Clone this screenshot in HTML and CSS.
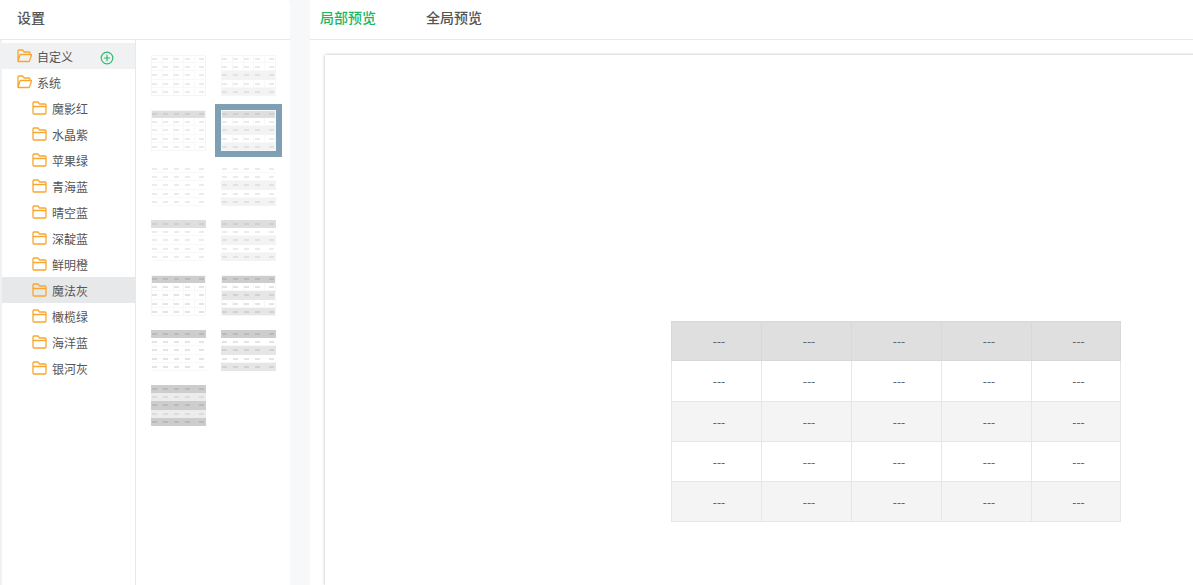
FILE: index.html
```html
<!DOCTYPE html>
<html lang="zh-CN">
<head>
  <meta charset="UTF-8">
  <title>设置</title>
  <link rel="stylesheet" href="styles.css">
</head>
<body>

  <svg class="defs" width="0" height="0">
    <symbol id="folder-open" viewBox="0 0 15 14">
      <path d="M1 12.5V2a1 1 0 0 1 1-1h3.6l1.6 2H12a1 1 0 0 1 1 1v1.5M1 12.5h10.6a1 1 0 0 0 .9-.6L14.500 6.300a.6.6 0 0 0-.6-.8H3.800a1 1 0 0 0-.9.6L1 12.500z" fill="none" stroke="#f9a62e" stroke-width="1.300" stroke-linejoin="round"/>
    </symbol>
    <symbol id="folder" viewBox="0 0 15 14">
      <path d="M1 2a1 1 0 0 1 1-1h4l1.600 2H13a1 1 0 0 1 1 1v8a1 1 0 0 1-1 1H2a1 1 0 0 1-1-1zM1 5.500h13" fill="none" stroke="#f9a62e" stroke-width="1.300" stroke-linejoin="round"/>
    </symbol>
  </svg>

  <!-- Settings panel -->
  <aside class="settings">
    <div class="panel-title">设置</div>
    <div class="settings-body">
      <ul class="tree">
        <li class="tree-item active">
          <svg class="folder"><use href="#folder-open"/></svg>自定义
          <svg class="add" viewBox="0 0 14 14">
            <circle cx="7" cy="7" r="5.800" fill="none" stroke="#2dbb6c" stroke-width="1.200"/>
            <path d="M7 3.800v6.400M3.800 7h6.400" stroke="#2dbb6c" stroke-width="1.200"/>
          </svg>
        </li>
        <li class="tree-item"><svg class="folder"><use href="#folder-open"/></svg>系统</li>
        <li class="tree-item child"><svg class="folder"><use href="#folder"/></svg>魔影红</li>
        <li class="tree-item child"><svg class="folder"><use href="#folder"/></svg>水晶紫</li>
        <li class="tree-item child"><svg class="folder"><use href="#folder"/></svg>苹果绿</li>
        <li class="tree-item child"><svg class="folder"><use href="#folder"/></svg>青海蓝</li>
        <li class="tree-item child"><svg class="folder"><use href="#folder"/></svg>晴空蓝</li>
        <li class="tree-item child"><svg class="folder"><use href="#folder"/></svg>深靛蓝</li>
        <li class="tree-item child"><svg class="folder"><use href="#folder"/></svg>鲜明橙</li>
        <li class="tree-item child selected"><svg class="folder"><use href="#folder"/></svg>魔法灰</li>
        <li class="tree-item child"><svg class="folder"><use href="#folder"/></svg>橄榄绿</li>
        <li class="tree-item child"><svg class="folder"><use href="#folder"/></svg>海洋蓝</li>
        <li class="tree-item child"><svg class="folder"><use href="#folder"/></svg>银河灰</li>
      </ul>

      <div class="thumbs">
        <div class="thumb grid"><i></i><i></i><i></i><i></i><i></i></div>
        <div class="thumb grid striped"><i></i><i></i><i></i><i></i><i></i></div>
        <div class="thumb grid head"><i></i><i></i><i></i><i></i><i></i></div>
        <div class="thumb-picked"><div class="thumb grid head striped"><i></i><i></i><i></i><i></i><i></i></div></div>
        <div class="thumb lines"><i></i><i></i><i></i><i></i><i></i></div>
        <div class="thumb lines striped"><i></i><i></i><i></i><i></i><i></i></div>
        <div class="thumb lines head"><i></i><i></i><i></i><i></i><i></i></div>
        <div class="thumb lines head striped"><i></i><i></i><i></i><i></i><i></i></div>
        <div class="thumb grid dark head"><i></i><i></i><i></i><i></i><i></i></div>
        <div class="thumb grid dark head striped"><i></i><i></i><i></i><i></i><i></i></div>
        <div class="thumb lines dark head"><i></i><i></i><i></i><i></i><i></i></div>
        <div class="thumb lines dark head striped"><i></i><i></i><i></i><i></i><i></i></div>
        <div class="thumb lines dark head striped solid"><i></i><i></i><i></i><i></i><i></i></div>
      </div>
    </div>
  </aside>

  <!-- Preview panel -->
  <main class="preview">
    <nav class="tabs">
      <a class="tab current" href="#">局部预览</a>
      <a class="tab" href="#">全局预览</a>
    </nav>
    <div class="canvas">
      <table class="sample">
        <tr class="sample-head"><td>---</td><td>---</td><td>---</td><td>---</td><td>---</td></tr>
        <tr class="tall"><td>---</td><td>---</td><td>---</td><td>---</td><td>---</td></tr>
        <tr class="alt"><td>---</td><td>---</td><td>---</td><td>---</td><td>---</td></tr>
        <tr><td>---</td><td>---</td><td>---</td><td>---</td><td>---</td></tr>
        <tr class="alt"><td>---</td><td>---</td><td>---</td><td>---</td><td>---</td></tr>
      </table>
    </div>
  </main>

</body>
</html>
```

FILE: styles.css
```css
/* General Styles */
html, body {
  height: 100%;
}

body {
  margin: 0;
  display: flex;
  gap: 20px;
  overflow: hidden;
  background-color: #f7f8fa;
  color: #555;
  font-family: "Noto Sans CJK SC", "Noto Sans", sans-serif;
  font-size: 12px;
}

.defs {
  position: absolute;
}

/* Settings panel */
.settings {
  width: 290px;
  flex-shrink: 0;
  display: flex;
  flex-direction: column;
  background-color: white;
  border-top-right-radius: 4px;
}

.panel-title {
  height: 39px;
  line-height: 35px;
  padding-left: 17px;
  font-size: 14px;
  font-weight: 500;
  color: #555;
  border-bottom: 1px solid #e6e9ed;
  flex-shrink: 0;
}

.settings-body {
  flex: 1;
  display: flex;
}

.tree {
  width: 133px;
  margin: 0;
  padding: 3px 0 0;
  list-style-type: none;
  border-left: 2px solid #f0f1f3;
  border-right: 1px solid #e6e9ed;
  flex-shrink: 0;
}

.tree-item {
  height: 25px;
  display: flex;
  align-items: center;
  padding: 1px 0 0 15px;
}

.tree-item.active {
  background-color: #f0f1f3;
}

.tree-item.child {
  padding-left: 30px;
}

.tree-item.selected {
  background-color: #e7e8ea;
}

.folder {
  width: 15px;
  height: 14px;
  margin-right: 5px;
  position: relative;
  top: -1px;
}

.add {
  width: 14px;
  height: 14px;
  margin-left: 27px;
  position: relative;
  top: 1px;
}

/* Style thumbnails */
.thumbs {
  flex: 1;
  display: grid;
  grid-template-columns: 55px 55px;
  grid-auto-rows: 41px;
  column-gap: 15px;
  row-gap: 14px;
  padding: 15px 0 0 15px;
  align-content: start;
}

.thumb {
  --alt: #fff;
  --dash: #ebebeb;
  --line: #f8f8f8;
  width: 55px;
  height: 41px;
  display: flex;
  flex-direction: column;
}

.thumb i {
  flex: 1;
  background-color: white;
  background-image:
    linear-gradient(var(--dash), var(--dash)),
    linear-gradient(var(--dash), var(--dash)),
    linear-gradient(var(--dash), var(--dash)),
    linear-gradient(var(--dash), var(--dash)),
    linear-gradient(var(--dash), var(--dash));
  background-size: 5px 2px;
  background-position: 1px 3px, 12px 3px, 23px 3px, 34px 3px, 48px 3px;
  background-repeat: no-repeat;
  box-shadow: inset 0 -1px 0 var(--line);
}

.thumb.grid {
  outline: 1px solid #f6f6f6;
  outline-offset: -1px;
}

.thumb.grid i {
  background-image:
    linear-gradient(var(--dash), var(--dash)),
    linear-gradient(var(--dash), var(--dash)),
    linear-gradient(var(--dash), var(--dash)),
    linear-gradient(var(--dash), var(--dash)),
    linear-gradient(var(--dash), var(--dash)),
    linear-gradient(var(--line), var(--line)),
    linear-gradient(var(--line), var(--line)),
    linear-gradient(var(--line), var(--line)),
    linear-gradient(var(--line), var(--line));
  background-size: 5px 2px, 5px 2px, 5px 2px, 5px 2px, 5px 2px, 1px 100%, 1px 100%, 1px 100%, 1px 100%;
  background-position: 1px 3px, 12px 3px, 23px 3px, 34px 3px, 48px 3px, 11px 0, 22px 0, 32px 0, 43px 0;
}

.thumb.striped {
  --alt: #f3f3f3;
}

.thumb.striped i:nth-child(odd) {
  --dash: #e2e2e2;
  --line: #f3f3f3;
  background-color: var(--alt);
}

.thumb.striped i:first-child {
  --dash: #ebebeb;
  --line: #f8f8f8;
  background-color: white;
}

.thumb.head i:first-child,
.thumb.head.striped i:first-child {
  --dash: #cfcfcf;
  --line: #dedede;
  background-color: #dedede;
  box-shadow: none;
}

.thumb.dark {
  --dash: #e4e4e4;
}

.thumb.dark.head i:first-child,
.thumb.dark.head.striped i:first-child {
  --dash: #bababa;
  --line: #cdcdcd;
  background-color: #cdcdcd;
}

.thumb.dark.striped {
  --alt: #e6e6e6;
}

.thumb.dark.striped i:nth-child(odd) {
  --dash: #d2d2d2;
  --line: #e6e6e6;
}

.thumb.dark.solid {
  --alt: #cdcdcd;
}

.thumb.dark.solid i:nth-child(even) {
  --line: #ececec;
  --dash: #dcdcdc;
  background-color: #ececec;
}

.thumb.dark.solid i:nth-child(odd) {
  --dash: #bababa;
  --line: #cdcdcd;
}

.thumb-picked {
  width: 55px;
  height: 41px;
  margin: -6px;
  padding: 6px;
  background-color: #7f9fb4;
}

/* Preview panel */
.preview {
  flex: 1;
  min-width: 0;
  display: flex;
  flex-direction: column;
  background-color: white;
}

.tabs {
  height: 39px;
  display: flex;
  gap: 50px;
  padding-left: 10px;
  border-bottom: 1px solid #e6e9ed;
  flex-shrink: 0;
}

.tab {
  line-height: 35px;
  font-size: 14px;
  font-weight: 500;
  color: #555;
  text-decoration: none;
}

.tab.current {
  color: #1db760;
}

.canvas {
  flex: 1;
  margin: 15px -20px 0 15px;
  padding: 266px 0 0 346px;
  background-color: white;
  box-shadow: 0 0 3px rgba(0, 0, 0, 0.3);
}

.sample {
  width: 450px;
  border-collapse: collapse;
  table-layout: fixed;
}

.sample td {
  width: 84px;
  height: 39px;
  padding: 0 0 0 5px;
  text-align: center;
  border: 1px solid #e6e6e6;
  line-height: 1;
}

.sample td:last-child {
  width: auto;
}

.sample .sample-head td {
  height: 38px;
  background-color: #dfdfdf;
  border-color: #d8d8d8;
}

.sample .tall td {
  height: 40px;
}

.sample .alt td {
  background-color: #f4f4f4;
}
```
